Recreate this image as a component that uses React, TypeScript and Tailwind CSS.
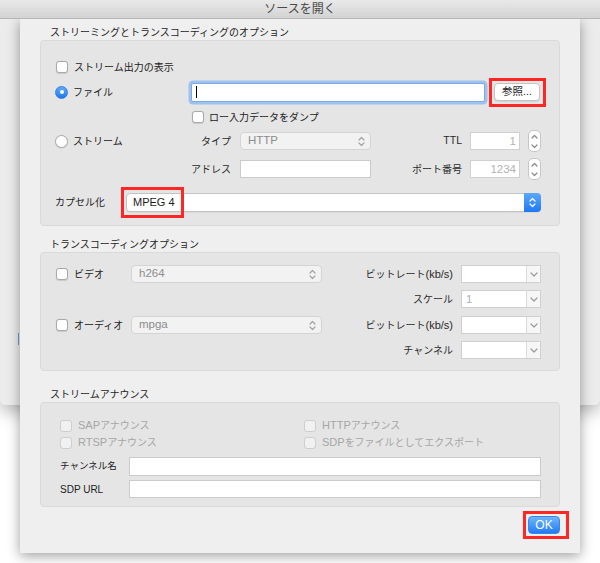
import type { ReactNode } from "react";

// chevrons used by popups, combos and steppers
function UpDown({ tall }: { tall?: boolean }) {
  return tall ? (
    <svg width="7" height="15" viewBox="0 0 7 15" fill="none" stroke="currentColor" strokeWidth="1.2" strokeLinecap="round" strokeLinejoin="round">
      <path d="M1 4 L3.5 1.5 L6 4" />
      <path d="M1 11 L3.5 13.5 L6 11" />
    </svg>
  ) : (
    <svg width="7" height="11" viewBox="0 0 7 11" fill="none" stroke="currentColor" strokeWidth="1.2" strokeLinecap="round" strokeLinejoin="round">
      <path d="M1 4 L3.5 1.5 L6 4" />
      <path d="M1 7 L3.5 9.5 L6 7" />
    </svg>
  );
}

function Down() {
  return (
    <svg width="8" height="5" viewBox="0 0 8 5" fill="none" stroke="currentColor" strokeWidth="1.2" strokeLinecap="round" strokeLinejoin="round">
      <path d="M1 1 L4 4 L7 1" />
    </svg>
  );
}

function Checkbox({ disabled }: { disabled?: boolean }) {
  return disabled ? (
    <span className="h-[12px] w-[12px] shrink-0 rounded-[3px] border border-[#cdcdcd] bg-[#f1f1f1]" />
  ) : (
    <span className="h-[12px] w-[12px] shrink-0 rounded-[3px] border border-[#a9a9a9] bg-white shadow-[0_0.5px_1px_rgba(0,0,0,0.12)]" />
  );
}

function Radio({ checked }: { checked?: boolean }) {
  return checked ? (
    <span className="flex h-[13px] w-[13px] shrink-0 items-center justify-center rounded-full border border-[#2f7fe4] bg-linear-to-b from-[#5fabfb] to-[#1c76ef]">
      <span className="h-[4px] w-[4px] rounded-full bg-white" />
    </span>
  ) : (
    <span className="h-[13px] w-[13px] shrink-0 rounded-full border border-[#a8a8a8] bg-white shadow-[0_0.5px_1px_rgba(0,0,0,0.12)]" />
  );
}

function Stepper() {
  return (
    <div className="ml-[8px] flex h-[22px] w-[13px] items-center justify-center rounded-[5px] border border-[#c6c6c6] bg-white text-[#8a8a8a]">
      <UpDown tall />
    </div>
  );
}

function Popup({ value, width }: { value: string; width: string }) {
  return (
    <div className={`flex h-[18px] ${width} items-center justify-between rounded-[4px] border border-[#d4d4d4] bg-[#f2f2f2] pl-[7px] pr-[5px] text-[11.5px] text-[#8c8c8c]`}>
      <span>{value}</span>
      <span className="text-[#a3a3a3]">
        <UpDown />
      </span>
    </div>
  );
}

function Combo({ value }: { value?: string }) {
  return (
    <div className="ml-[8px] flex h-[18px] w-[80px] border border-[#cfcfcf] bg-white">
      <div className="flex-1 pl-[4px] text-[11.5px] leading-[16px] text-[#b0b0b0]">{value}</div>
      <div className="flex w-[14px] items-center justify-center rounded-r-[3px] border-l border-[#dcdcdc] bg-[#f6f6f6] text-[#9a9a9a]">
        <Down />
      </div>
    </div>
  );
}

function SmallField({ value }: { value: string }) {
  return (
    <div className="ml-[8px] h-[18px] w-[50px] border border-[#d0d0d0] bg-white pr-[3px] text-right text-[11.5px] leading-[16px] text-[#b3b3b3]">
      {value}
    </div>
  );
}

function Label({ children, width }: { children: ReactNode; width: string }) {
  return <div className={`${width} shrink-0 text-right text-[10px] text-[#2a2a2a]`}>{children}</div>;
}

function Section({ title, children }: { title: string; children: ReactNode }) {
  return (
    <>
      <div className="h-[14px] pl-[10px] text-[10px] leading-[14px] text-[#1e1e1e]">{title}</div>
      {children}
    </>
  );
}

export default function App() {
  return (
    <div className="relative h-[563px] w-[600px] overflow-hidden bg-white font-['Liberation_Sans','Noto_Sans_CJK_JP',sans-serif] text-[#222]">
      {/* parent window behind the sheet */}
      <div className="relative h-[405px] rounded-b-[5px] bg-[#ececec] shadow-[0_6px_18px_rgba(0,0,0,0.3)]">
        <div className="relative z-10 h-[19px] border-b border-[#b6b6b6] bg-linear-to-b from-[#e9e9e9] to-[#d3d3d3] text-center text-[12px] leading-[18px] text-[#4a4a4a]">
          ソースを開く
        </div>
        <span className="absolute left-[18px] top-[333px] h-[12px] w-px bg-[#6f9fdc]" />
      </div>

      {/* sheet */}
      <div className="absolute left-[20px] top-[19px] flex h-[534px] w-[560px] flex-col bg-[#efefef] px-[20px] pt-[7px] shadow-[0_3px_12px_rgba(0,0,0,0.38)]">
        <Section title="ストリーミングとトランスコーディングのオプション">
          <div className="flex h-[186px] flex-col rounded-[4px] border border-[#dadada] bg-[#e5e5e5] pt-[16px]">
            <div className="flex h-[20px] items-center pl-[15px] text-[10px]">
              <Checkbox />
              <span className="ml-[6px]">ストリーム出力の表示</span>
            </div>

            <div className="flex h-[30px] items-center">
              <div className="flex w-[150px] items-center pl-[14px] text-[10px]">
                <Radio checked />
                <span className="ml-[5px]">ファイル</span>
              </div>
              <div className="flex h-[19px] w-[294px] items-center rounded-[2px] border border-[#7fa9df] bg-white pl-[4px] shadow-[0_0_0_2.5px_#9dc2f0]">
                <span className="h-[12px] w-px bg-black" />
              </div>
              <div className="relative ml-[9px]">
                <div className="flex h-[18px] w-[46px] items-center justify-center rounded-[4px] border border-[#c4c4c4] bg-white text-[10.5px] shadow-[0_1px_1px_rgba(0,0,0,0.08)]">
                  参照...
                </div>
                <span className="pointer-events-none absolute -bottom-[6px] -left-[5px] -right-[6px] -top-[5px] border-[3px] border-[#ff2626]" />
              </div>
            </div>

            <div className="flex h-[20px] items-center pl-[151px] text-[10px]">
              <Checkbox />
              <span className="ml-[5px]">ロー入力データをダンプ</span>
            </div>

            <div className="flex h-[28px] items-center">
              <div className="flex w-[149px] items-center pl-[14px] text-[10px]">
                <Radio />
                <span className="ml-[5px]">ストリーム</span>
              </div>
              <Label width="w-[41px]">タイプ</Label>
              <div className="ml-[9px]">
                <Popup value="HTTP" width="w-[131px]" />
              </div>
              <Label width="w-[91px]">
                <span className="text-[10.5px]">TTL</span>
              </Label>
              <SmallField value="1" />
              <Stepper />
            </div>

            <div className="flex h-[28px] items-center">
              <div className="w-[149px]" />
              <Label width="w-[41px]">アドレス</Label>
              <div className="ml-[9px] h-[18px] w-[131px] border border-[#cbcbcb] bg-white" />
              <Label width="w-[91px]">ポート番号</Label>
              <SmallField value="1234" />
              <Stepper />
            </div>

            <div className="mt-[6px] flex h-[26px] items-center">
              <div className="w-[85px] pl-[14px] text-[10px]">カプセル化</div>
              <div className="relative flex h-[19px] w-[415px] rounded-[4px] border border-[#c4c4c4] bg-white shadow-[0_1px_1px_rgba(0,0,0,0.06)]">
                <div className="flex-1 pl-[6px] text-[11px] leading-[17px] text-[#1a1a1a]">MPEG 4</div>
                <div className="-my-px -mr-px flex w-[17px] items-center justify-center rounded-r-[4px] bg-linear-to-b from-[#5ba8fb] to-[#1d78f1] text-white">
                  <UpDown />
                </div>
                <span className="pointer-events-none absolute -left-[6px] -top-[7px] h-[31px] w-[63px] border-[3px] border-[#ff2626]" />
              </div>
            </div>
          </div>
        </Section>

        <div className="mt-[12px]" />
        <Section title="トランスコーディングオプション">
          <div className="flex h-[119px] flex-col rounded-[4px] border border-[#dadada] bg-[#e5e5e5] pt-[9px]">
            <div className="flex h-[24px] items-center">
              <div className="flex w-[90px] items-center pl-[15px] text-[10px]">
                <Checkbox />
                <span className="ml-[6px]">ビデオ</span>
              </div>
              <Popup value="h264" width="w-[191px]" />
              <Label width="w-[131px]">
                ビットレート<span className="text-[11px]">(kb/s)</span>
              </Label>
              <Combo />
            </div>
            <div className="flex h-[26px] items-center">
              <div className="w-[281px]" />
              <Label width="w-[131px]">スケール</Label>
              <Combo value="1" />
            </div>
            <div className="flex h-[26px] items-center">
              <div className="flex w-[90px] items-center pl-[15px] text-[10px]">
                <Checkbox />
                <span className="ml-[6px]">オーディオ</span>
              </div>
              <Popup value="mpga" width="w-[191px]" />
              <Label width="w-[131px]">
                ビットレート<span className="text-[11px]">(kb/s)</span>
              </Label>
              <Combo />
            </div>
            <div className="flex h-[24px] items-center">
              <div className="w-[281px]" />
              <Label width="w-[131px]">チャンネル</Label>
              <Combo />
            </div>
          </div>
        </Section>

        <div className="mt-[17px]" />
        <Section title="ストリームアナウンス">
          <div className="flex h-[105px] flex-col rounded-[4px] border border-[#dadada] bg-[#e5e5e5] pt-[14px] text-[10px] text-[#a6a6a6]">
            <div className="flex h-[17px] items-center">
              <div className="flex w-[263px] items-center pl-[19px]">
                <Checkbox disabled />
                <span className="ml-[6px]">
                  <span className="text-[11px]">SAP</span>アナウンス
                </span>
              </div>
              <Checkbox disabled />
              <span className="ml-[6px]">
                <span className="text-[11px]">HTTP</span>アナウンス
              </span>
            </div>
            <div className="flex h-[17px] items-center">
              <div className="flex w-[263px] items-center pl-[19px]">
                <Checkbox disabled />
                <span className="ml-[6px]">
                  <span className="text-[11px]">RTSP</span>アナウンス
                </span>
              </div>
              <Checkbox disabled />
              <span className="ml-[6px]">
                <span className="text-[11px]">SDP</span>をファイルとしてエクスポート
              </span>
            </div>
            <div className="mt-[6px] flex h-[19px] items-center text-[#222]">
              <div className="w-[88px] pl-[19px] text-[9.5px]">チャンネル名</div>
              <div className="h-[19px] w-[412px] border border-[#cbcbcb] bg-white" />
            </div>
            <div className="mt-[4px] flex h-[18px] items-center text-[#222]">
              <div className="w-[88px] pl-[19px]">SDP URL</div>
              <div className="h-[18px] w-[412px] border border-[#cbcbcb] bg-white" />
            </div>
          </div>
        </Section>

        <div className="mt-[9px] flex justify-end">
          <div className="relative">
            <div className="flex h-[18px] w-[32px] items-center justify-center rounded-[4px] border border-[#3a86ea] bg-linear-to-b from-[#6cb4fc] to-[#1f7bf3] text-[12px] text-white">
              OK
            </div>
            <span className="pointer-events-none absolute -bottom-[5px] -left-[5px] -right-[9px] -top-[5px] border-[3px] border-[#ff2626]" />
          </div>
        </div>
      </div>
    </div>
  );
}
